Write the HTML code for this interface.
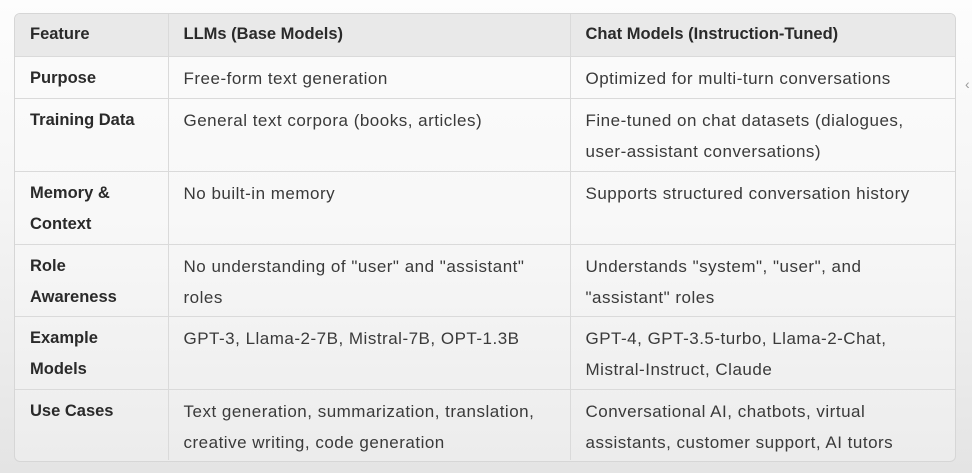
<!DOCTYPE html>
<html><head><style>
html,body{margin:0;width:972px;height:473px;overflow:hidden;background:linear-gradient(#fdfdfd 0,#f6f6f6 180px,#e4e4e4 473px);font-family:"Liberation Sans",sans-serif;}
.wrap{position:absolute;left:14px;top:13px;width:940px;height:447px;border:1px solid #d6d6d6;border-radius:6px;overflow:hidden;background:linear-gradient(#fbfbfb 0,#f8f8f8 200px,#ececec 447px);}
table{border-collapse:collapse;width:940px;table-layout:fixed;font-size:17px;letter-spacing:.5px;color:#3a3a3a;}
td{border-right:1px solid #dadada;border-bottom:1px solid #dadada;vertical-align:top;padding:0 15px;line-height:31px;white-space:nowrap;overflow:hidden;}
td:last-child{border-right:none}
tr:last-child td{border-bottom:none}
td:first-child{font-weight:bold;color:#2a2a2a;letter-spacing:0;font-size:16.5px}
tr.h td{background:#e9e9e9;color:#2a2a2a;font-weight:bold;letter-spacing:0;font-size:16.5px}
.r1 td{padding-top:6px}
</style></head><body>
<div class="wrap"><table>
<colgroup><col style="width:153px"><col style="width:402px"><col></colgroup>
<tr class="h" style="height:42px"><td style="padding-top:5px">Feature</td><td style="padding-top:5px">LLMs (Base Models)</td><td style="padding-top:5px">Chat Models (Instruction-Tuned)</td></tr>
<tr style="height:42px" class="r1"><td>Purpose</td><td>Free-form text generation</td><td>Optimized for multi-turn conversations</td></tr>
<tr style="height:73px" class="r1"><td>Training Data</td><td>General text corpora (books, articles)</td><td>Fine-tuned on chat datasets (dialogues,<br>user-assistant conversations)</td></tr>
<tr style="height:73px" class="r1"><td>Memory &amp;<br>Context</td><td>No built-in memory</td><td>Supports structured conversation history</td></tr>
<tr style="height:72px" class="r1"><td>Role<br>Awareness</td><td>No understanding of "user" and "assistant"<br>roles</td><td>Understands "system", "user", and<br>"assistant" roles</td></tr>
<tr style="height:73px" class="r1"><td>Example<br>Models</td><td>GPT-3, Llama-2-7B, Mistral-7B, OPT-1.3B</td><td>GPT-4, GPT-3.5-turbo, Llama-2-Chat,<br>Mistral-Instruct, Claude</td></tr>
<tr style="height:71px" class="r1"><td>Use Cases</td><td>Text generation, summarization, translation,<br>creative writing, code generation</td><td>Conversational AI, chatbots, virtual<br>assistants, customer support, AI tutors</td></tr>
</table></div>
<div style="position:absolute;left:965px;top:76px;color:#999;font-size:14px">‹</div>
</body></html>
